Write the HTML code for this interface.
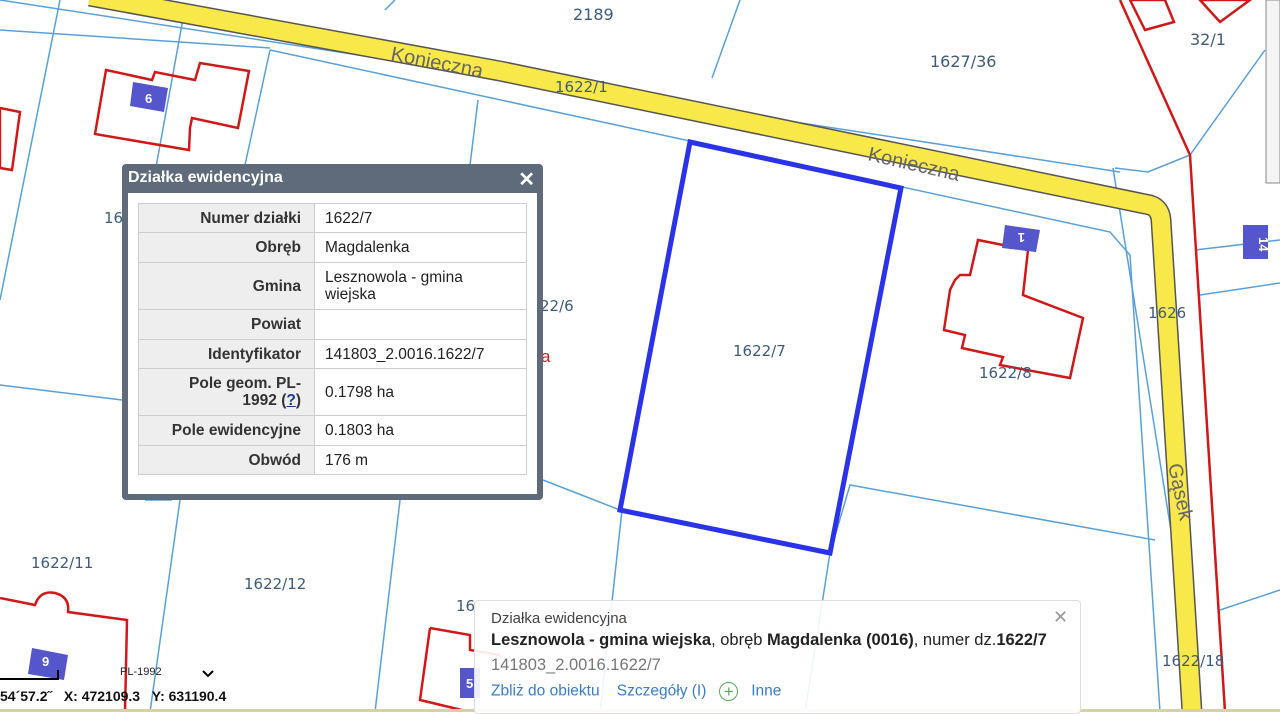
<!DOCTYPE html>
<html><head><meta charset="utf-8"><style>
body{margin:0;width:1280px;height:712px;overflow:hidden;background:#fff;font-family:"Liberation Sans",Arial,sans-serif;position:relative}
svg{position:absolute;left:0;top:0}
.pop{position:absolute;left:122px;top:164px;width:421px;height:336px;background:#5f6a7a;border-radius:4px}
.pop .t{position:absolute;left:6px;top:5px;color:#fff;font-weight:bold;font-size:16px}
.pop .x{position:absolute;right:8px;top:3px;color:#fff;font-weight:bold;font-size:20px}
.pop .in{position:absolute;left:6px;top:29px;width:409px;height:301px;background:#fff}
table{position:absolute;left:10px;top:10px;width:389px;border-collapse:collapse;font-size:15.5px;color:#222}
td{border:1px solid #ccc;padding:0 10px;line-height:17px}
td.l{background:#eee;text-align:right;font-weight:bold;width:152px;color:#333;padding-right:13px}
.bp{position:absolute;left:474px;top:600px;width:605px;height:112px;background:rgba(255,255,255,.9);border:1px solid #ddd;border-radius:4px;font-size:16.5px}
.bp div{position:absolute;left:16px;white-space:nowrap}
.lnk{color:#3a7ec4}
</style></head><body>
<svg width="1280" height="712" viewBox="0 0 1280 712">
<g fill="none" stroke="#5aa0d8" stroke-width="1.5">
<path d="M60 0 L0 300"/><path d="M185 8 L150 200"/><path d="M270 50 L245 165"/><path d="M0 0 L1120 172"/>
<path d="M0 30 L270 48 M270 50 L1110 232 L1130 255 L1160 712"/>
<path d="M395 0 L385 10"/><path d="M740 0 L712 78"/><path d="M478 100 L470 165"/>
<path d="M1115 168 L1148 172 L1190 155 L1265 50"/>
<path d="M1113 168 L1200 712"/>
<path d="M1195 250 L1280 240 M1200 295 L1280 283"/>
<path d="M0 385 L122 400"/><path d="M543 480 L620 510 M830 553 L850 485 L1155 540"/>
<path d="M622 510 L600 712"/><path d="M830 553 L805 712"/>
<path d="M145 500 L172 500 M180 500 L150 712"/><path d="M400 500 L375 712"/>
<path d="M1220 610 L1280 590"/>
</g>
<path d="M90 -4 L500 71 L1150 205 Q1160 208 1161 220 L1192 712" fill="none" stroke="#555" stroke-width="21"/>
<path d="M90 -4 L500 71 L1150 205 Q1160 208 1161 220 L1192 712" fill="none" stroke="#f8e84a" stroke-width="18"/>
<polygon points="690,142 901,188 830,553 620,510" fill="none" stroke="#2b33e8" stroke-width="5"/>
<g fill="none" stroke="#d01818" stroke-width="2.5">
<polygon points="106,70 152,80 155,72 195,80 200,63 249,71 238,128 192,118 190,128 189,150 95,134"/>
<polygon points="0,108 20,112 12,170 0,168"/>
<polygon points="978,240 1028,250 1023,295 1083,318 1070,378 1000,365 1003,357 962,348 965,335 944,330 950,290 955,280 960,275 970,275"/>
<path d="M1120 0 L1190 155 L1225 712"/>
<polygon points="1130,0 1145,30 1174,22 1165,0"/><polygon points="1200,0 1220,22 1250,0"/>
<path d="M0 598 L35 605 Q40 590 55 593 Q70 597 68 612 L127 620 L125 712"/>
<path d="M430 628 L470 635 L470 650 L500 655 M430 628 L420 700 L470 712"/>
</g>
<g fill="#5555cc"><polygon points="133,82 168,88 164,112 130,106"/><polygon points="1005,225 1040,230 1036,252 1002,248"/><rect x="1243" y="225" width="25" height="34"/><polygon points="32,648 68,655 64,680 28,674"/><rect x="460" y="668" width="20" height="30"/></g>
<g fill="#fff" font-size="13" font-weight="bold"><text x="145" y="103">6</text><text x="1015" y="243" transform="rotate(180 1020 238)">1</text><text x="42" y="666">9</text><text x="1250" y="238" transform="rotate(90 1255 242)">14</text><text x="466" y="688">5</text></g>
<g fill="#3f5a7a" font-size="16" font-family="DejaVu Sans,sans-serif">
<text x="573" y="20">2189</text><text x="930" y="67">1627/36</text><text x="1190" y="45">32/1</text>
<text x="555" y="92" font-size="15">1622/1</text><text x="733" y="356" font-size="15">1622/7</text>
<text x="979" y="378" font-size="15">1622/8</text><text x="1148" y="318" font-size="15">1626</text>
<text x="540" y="311" font-size="15">22/6</text><text x="104" y="223" font-size="15">16</text>
<text x="31" y="568" font-size="15">1622/11</text><text x="244" y="589" font-size="15">1622/12</text>
<text x="456" y="611" font-size="15">16</text><text x="1162" y="666" font-size="15">1622/18</text>
</g>
<text x="541" y="362" fill="#d02020" font-size="17">a</text>
<g fill="#666" font-size="20"><text x="390" y="60" transform="rotate(11 390 60)">Konieczna</text><text x="867" y="160" transform="rotate(13 867 160)">Konieczna</text><text x="1168" y="465" transform="rotate(78 1168 465)">Gąsek</text></g>
<path d="M0 679 L58 679 L58 670" stroke="#000" stroke-width="2" fill="none"/>
<path d="M203 671 l5 5 l5 -5" stroke="#000" stroke-width="2" fill="none"/>
<rect x="1266" y="0" width="14" height="183" fill="#f4f4f4" stroke="#888"/>
<rect x="0" y="709" width="1280" height="3" fill="#d9cfa8"/>
</svg>
<div style="position:absolute;left:120px;top:666px;font-size:11px;color:#222">PL-1992</div>
<div style="position:absolute;left:0;top:688px;font-size:14px;font-weight:bold;color:#111">54´57.2˝&nbsp;&nbsp; X: 472109.3 &nbsp;&nbsp;Y: 631190.4</div>
<div class="pop"><div class="t">Działka ewidencyjna</div><div class="x">✕</div>
<div class="in"><table>
<tr style="height:29px"><td class="l">Numer działki</td><td>1622/7</td></tr>
<tr style="height:30px"><td class="l">Obręb</td><td>Magdalenka</td></tr>
<tr style="height:47px"><td class="l">Gmina</td><td>Lesznowola - gmina wiejska</td></tr>
<tr style="height:30px"><td class="l">Powiat</td><td></td></tr>
<tr style="height:29px"><td class="l">Identyfikator</td><td>141803_2.0016.1622/7</td></tr>
<tr style="height:47px"><td class="l">Pole geom. PL-<br>1992 (<u style="color:#1a3a9a">?</u>)</td><td>0.1798 ha</td></tr>
<tr style="height:30px"><td class="l">Pole ewidencyjne</td><td>0.1803 ha</td></tr>
<tr style="height:29px"><td class="l">Obwód</td><td>176 m</td></tr>
</table></div></div>
<div class="bp">
<div style="top:9px;color:#444;font-size:15px">Działka ewidencyjna</div>
<div style="top:6px;left:578px;color:#999;font-size:18px">✕</div>
<div style="top:30px;color:#222"><b>Lesznowola - gmina wiejska</b>, obręb <b>Magdalenka (0016)</b>, numer dz.<b>1622/7</b></div>
<div style="top:55px;color:#777">141803_2.0016.1622/7</div>
<div style="top:81px;font-size:15.5px"><span class="lnk">Zbliż do obiektu</span>&nbsp;&nbsp;&nbsp; <span class="lnk">Szczegóły (I)</span>&nbsp;&nbsp; <span style="display:inline-block;width:17px;height:17px;border:1.5px solid #5a5;border-radius:50%;color:#5a5;text-align:center;line-height:17px;font-size:17px;vertical-align:middle">+</span>&nbsp;&nbsp; <span class="lnk">Inne</span></div>
</div>
</body></html>
